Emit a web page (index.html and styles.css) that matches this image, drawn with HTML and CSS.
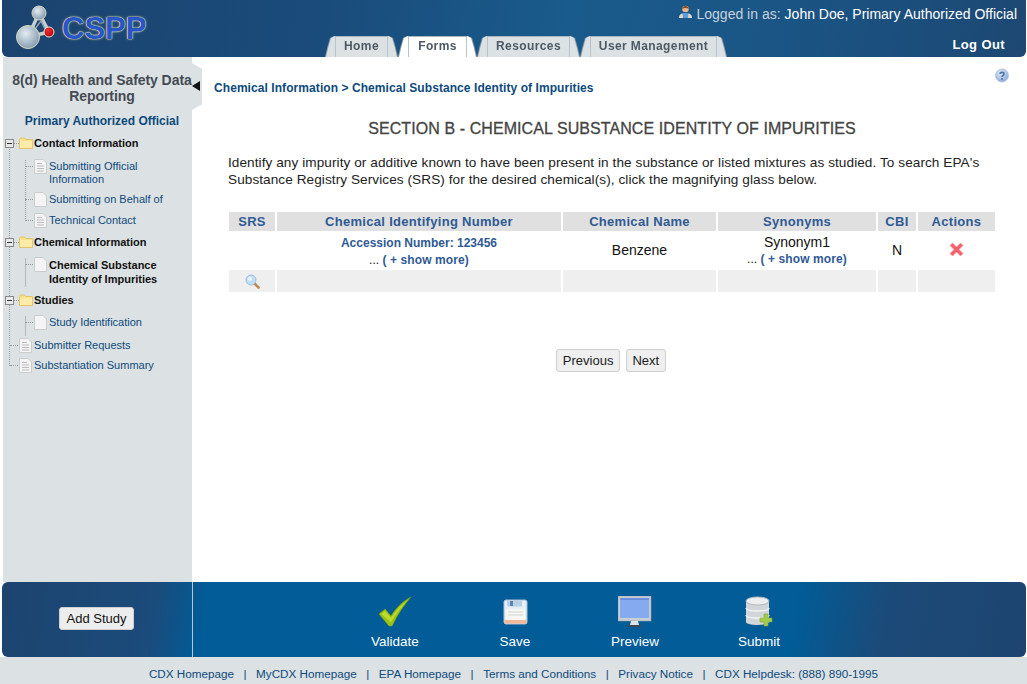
FILE: index.html
```html
<!DOCTYPE html>
<html lang="en">
<head>
<meta charset="utf-8">
<title>CSPP - Chemical Substance Identity of Impurities</title>
<link rel="stylesheet" href="styles.css">
</head>
<body>
<header class="header">
  <div class="logo">
    <svg class="logo-mark" width="42" height="46" viewBox="0 0 42 46">
      <defs>
        <radialGradient id="ballA" cx=".4" cy=".35" r=".7"><stop offset="0" stop-color="#e4ecf2"/><stop offset="1" stop-color="#7f97ad"/></radialGradient>
        <radialGradient id="ballR" cx=".4" cy=".35" r=".7"><stop offset="0" stop-color="#f03030"/><stop offset="1" stop-color="#b00010"/></radialGradient>
      </defs>
      <path d="M12 32 L23 8 L33 27 Z" fill="none" stroke="#c4ced2" stroke-width="3.500"/>
      <path d="M19 24 L25 16 L29 24" fill="none" stroke="#8ea2b2" stroke-width="1.500"/>
      <circle cx="23" cy="8" r="7" fill="url(#ballA)" stroke="#d6d9b8"/>
      <circle cx="12" cy="32" r="11.500" fill="url(#ballA)" stroke="#d6d9b8"/>
      <circle cx="33" cy="27" r="5" fill="url(#ballR)" stroke="#e8e8d0"/>
    </svg>
    <span class="logo-text">CSPP</span>
  </div>
  <div class="head-right">
    <div class="user">
      <svg class="user-icon" width="15" height="15" viewBox="0 0 15 15">
        <path d="M1 14 C1 10 4 9 7.500 9 C11 9 14 10 14 14 Z" fill="#5b9be0"/>
        <path d="M1 14 C1 11.500 2.500 10 4.500 9.500 L5 14 Z M14 14 C14 11.500 12.500 10 10.500 9.500 L10 14 Z" fill="#e8d8c0"/>
        <circle cx="7.500" cy="5" r="3.300" fill="#e8b890"/>
        <path d="M4 5 C4 1 11 1 11 5 C9 3.500 6 3.500 4 5 Z" fill="#8a4a20"/>
      </svg>
      <span class="user-label">Logged in as:</span>
      <span class="user-name">John Doe, Primary Authorized Official</span>
    </div>
    <div class="nav-row">
      <nav class="tabs">
        <a class="tab tab-home">Home</a>
        <a class="tab tab-active tab-forms">Forms</a>
        <a class="tab tab-resources">Resources</a>
        <a class="tab tab-users">User Management</a>
      </nav>
      <a class="logout">Log Out</a>
    </div>
  </div>
</header>

<div class="middle">
  <aside class="sidebar">
    <h2 class="side-title">8(d) Health and Safety Data<br>Reporting</h2>
    <div class="side-role">Primary Authorized Official</div>
    <div class="tree">
      <div class="row row-folder row-contact">
        <svg class="exp" width="9" height="9" viewBox="0 0 9 9"><rect x=".5" y=".5" width="8" height="8" fill="#e8e8e8" stroke="#888"/><path d="M2 4.500H7" stroke="#333"/></svg>
        <span class="conn conn-short"></span>
        <svg class="folder" width="14" height="12" viewBox="0 0 14 12"><path d="M.5 2.500 L1.500 1 H5.500 L6.500 2.500 H13.500 V11.500 H.5 Z" fill="#fbe28a" stroke="#e3c468"/><rect x="1" y="4" width="12" height="7" fill="#fdeca8"/></svg>
        <span class="label-b">Contact Information</span>
      </div>
      <div class="kids kids-dotted kids-contact">
        <div class="row row-kid row-k1"><span class="conn"></span><svg class="doc" width="13" height="15" viewBox="0 0 13 15"><path d="M.5 .5 H9 L12.500 4 V14.500 H.5 Z" fill="#f4f4f4" stroke="#ccc"/><path d="M3 4.500H8M3 7H10M3 9.500H10M3 12H10" stroke="#bbb"/></svg><a class="label">Submitting Official<br>Information</a></div>
        <div class="row row-kid row-k2"><span class="conn"></span><svg class="doc" width="13" height="15" viewBox="0 0 13 15"><path d="M.5 .5 H9 L12.500 4 V14.500 H.5 Z" fill="#f4f4f4" stroke="#ccc"/></svg><a class="label">Submitting on Behalf of</a></div>
        <div class="row row-kid row-k3"><span class="conn"></span><svg class="doc" width="13" height="15" viewBox="0 0 13 15"><path d="M.5 .5 H9 L12.500 4 V14.500 H.5 Z" fill="#f4f4f4" stroke="#ccc"/><path d="M3 4.500H8M3 7H10M3 9.500H10M3 12H10" stroke="#bbb"/></svg><a class="label">Technical Contact</a></div>
      </div>
      <div class="row row-folder row-chem">
        <svg class="exp" width="9" height="9" viewBox="0 0 9 9"><rect x=".5" y=".5" width="8" height="8" fill="#e8e8e8" stroke="#888"/><path d="M2 4.500H7" stroke="#333"/></svg>
        <span class="conn conn-short"></span>
        <svg class="folder" width="14" height="12" viewBox="0 0 14 12"><path d="M.5 2.500 L1.500 1 H5.500 L6.500 2.500 H13.500 V11.500 H.5 Z" fill="#fbe28a" stroke="#e3c468"/><rect x="1" y="4" width="12" height="7" fill="#fdeca8"/></svg>
        <span class="label-b">Chemical Information</span>
      </div>
      <div class="kids kids-solid kids-chem">
        <div class="row row-kid row-k4"><span class="conn"></span><svg class="doc" width="13" height="15" viewBox="0 0 13 15"><path d="M.5 .5 H9 L12.500 4 V14.500 H.5 Z" fill="#f4f4f4" stroke="#ccc"/></svg><span class="label-b label-cur">Chemical Substance<br>Identity of Impurities</span></div>
      </div>
      <div class="row row-folder row-studies">
        <svg class="exp" width="9" height="9" viewBox="0 0 9 9"><rect x=".5" y=".5" width="8" height="8" fill="#e8e8e8" stroke="#888"/><path d="M2 4.500H7" stroke="#333"/></svg>
        <span class="conn conn-short"></span>
        <svg class="folder" width="14" height="12" viewBox="0 0 14 12"><path d="M.5 2.500 L1.500 1 H5.500 L6.500 2.500 H13.500 V11.500 H.5 Z" fill="#fbe28a" stroke="#e3c468"/><rect x="1" y="4" width="12" height="7" fill="#fdeca8"/></svg>
        <span class="label-b">Studies</span>
      </div>
      <div class="kids kids-solid kids-studies">
        <div class="row row-kid row-k5"><span class="conn"></span><svg class="doc" width="13" height="15" viewBox="0 0 13 15"><path d="M.5 .5 H9 L12.500 4 V14.500 H.5 Z" fill="#f4f4f4" stroke="#ccc"/></svg><a class="label">Study Identification</a></div>
      </div>
      <div class="row row-root row-r1"><span class="conn conn-root"></span><svg class="doc" width="13" height="15" viewBox="0 0 13 15"><path d="M.5 .5 H9 L12.500 4 V14.500 H.5 Z" fill="#f4f4f4" stroke="#ccc"/><path d="M3 4.500H8M3 7H10M3 9.500H10M3 12H10" stroke="#bbb"/></svg><a class="label">Submitter Requests</a></div>
      <div class="row row-root row-r2"><span class="conn conn-root"></span><svg class="doc" width="13" height="15" viewBox="0 0 13 15"><path d="M.5 .5 H9 L12.500 4 V14.500 H.5 Z" fill="#f4f4f4" stroke="#ccc"/><path d="M3 4.500H8M3 7H10M3 9.500H10M3 12H10" stroke="#bbb"/></svg><a class="label">Substantiation Summary</a></div>
    </div>
    <div class="notch"><span class="notch-arrow"></span></div>
  </aside>

  <main class="main">
    <svg class="help" width="14" height="15" viewBox="0 0 14 15">
      <defs><radialGradient id="helpG" cx=".4" cy=".3" r=".8"><stop offset="0" stop-color="#e4ecf6"/><stop offset="1" stop-color="#7f9fd0"/></radialGradient></defs>
      <circle cx="7" cy="7.500" r="6.500" fill="url(#helpG)" stroke="#b4c6de"/>
      <path d="M5 6 C5 3.800 9 3.800 9 6 C9 7.500 7 7.500 7 9" fill="none" stroke="#4a74b4" stroke-width="1.600"/>
      <circle cx="7" cy="11" r="1" fill="#4a74b4"/>
    </svg>
    <div class="crumb">Chemical Information &gt; Chemical Substance Identity of Impurities</div>
    <h1 class="section">SECTION B - CHEMICAL SUBSTANCE IDENTITY OF IMPURITIES</h1>
    <p class="intro">Identify any impurity or additive known to have been present in the substance or listed mixtures as studied. To search EPA's Substance Registry Services (SRS) for the desired chemical(s), click the magnifying glass below.</p>
    <table class="grid">
      <thead>
        <tr>
          <th class="c-srs">SRS</th>
          <th class="c-num">Chemical Identifying Number</th>
          <th class="c-name">Chemical Name</th>
          <th class="c-syn">Synonyms</th>
          <th class="c-cbi">CBI</th>
          <th class="c-act">Actions</th>
        </tr>
      </thead>
      <tbody>
        <tr class="data">
          <td></td>
          <td><a class="acc">Accession Number: 123456</a><br><span class="more">... <a class="more-link">( + show more)</a></span></td>
          <td class="cell-up">Benzene</td>
          <td>Synonym1<br><span class="more">... <a class="more-link">( + show more)</a></span></td>
          <td class="cell-up">N</td>
          <td>
            <svg class="del" width="15" height="15" viewBox="0 0 15 15"><path d="M3.500 1 L7.500 5 L11.500 1 L14 3.500 L10 7.500 L14 11.500 L11.500 14 L7.500 10 L3.500 14 L1 11.500 L5 7.500 L1 3.500 Z" fill="#f2606a" stroke="#f79aa0" stroke-width=".8"/></svg>
          </td>
        </tr>
        <tr class="entry">
          <td>
            <svg class="search" width="15" height="15" viewBox="0 0 15 15"><path d="M9 9 L13.500 13.500" stroke="#c08a50" stroke-width="2.600" stroke-linecap="round"/><circle cx="6" cy="6" r="5" fill="#c4ddf6" stroke="#9bbde0"/><circle cx="5" cy="4.800" r="2" fill="#eaf4fd"/></svg>
          </td>
          <td></td><td></td><td></td><td></td><td></td>
        </tr>
      </tbody>
    </table>
    <div class="pager">
      <button class="btn" type="button">Previous</button>
      <button class="btn" type="button">Next</button>
    </div>
  </main>
</div>

<section class="actionbar">
  <div class="action-left"><button class="btn btn-add" type="button">Add Study</button></div>
  <div class="action-right">
    <a class="action">
      <svg width="34" height="32" viewBox="0 0 34 32"><path d="M1 18 L7 13 L13 20 C18 12 25 5 33 1 C26 9 19 19 14 30 L11 30 Z" fill="#9cc214" stroke="#7ea30c" stroke-width=".6"/><path d="M3 18 L7 15 L13 22 C18 14 24 8 30 4 C24 10 18 18 13 26 Z" fill="#bcdc30"/></svg>
      <span>Validate</span>
    </a>
    <a class="action">
      <svg width="34" height="32" viewBox="0 0 34 32"><rect x="6" y="4" width="23" height="24" rx="2" fill="#e6eef6" stroke="#a8bed4"/><rect x="9" y="4.500" width="15" height="6" fill="#b9d0e8"/><rect x="12" y="5" width="3" height="5" fill="#5f86ad"/><rect x="8" y="13" width="19" height="11" fill="#f6f6f2"/><path d="M10 16H25M10 19H25" stroke="#d4d4d0"/><rect x="6.500" y="24" width="22" height="3.500" fill="#f2b89a"/></svg>
      <span>Save</span>
    </a>
    <a class="action">
      <svg width="34" height="32" viewBox="0 0 34 32"><rect x="0" y="0" width="33" height="25" fill="#c8ced2" stroke="#9aa2a8" stroke-width=".6"/><rect x="2" y="2" width="29" height="20" fill="#86aaf0"/><rect x="2" y="2" width="29" height="2" fill="#6a8ee0"/><path d="M13 25 H20 L21 29 H12 Z" fill="#dfe3e6"/><rect x="10" y="29" width="13" height="2" fill="#3a4a55"/></svg>
      <span>Preview</span>
    </a>
    <a class="action action-submit">
      <svg width="28" height="32" viewBox="0 0 28 32"><path d="M1 5 V26 C1 30 24 30 24 26 V5 Z" fill="#d2d6d8"/><ellipse cx="12.500" cy="5" rx="11.500" ry="4" fill="#eceeef" stroke="#b4b8ba"/><path d="M1 12 C1 16 24 16 24 12 M1 19 C1 23 24 23 24 19" fill="none" stroke="#f2f3f4" stroke-width="1.400"/><path d="M15 22 H19 V18 H23 V22 H27 V26 H23 V30 H19 V26 H15 Z" fill="#a4cc4c" stroke="#7fa632" stroke-width=".6"/></svg>
      <span>Submit</span>
    </a>
  </div>
</section>

<footer class="footer">
  <a>CDX Homepage</a><span class="sep">|</span>
  <a>MyCDX Homepage</a><span class="sep">|</span>
  <a>EPA Homepage</a><span class="sep">|</span>
  <a>Terms and Conditions</a><span class="sep">|</span>
  <a>Privacy Notice</a><span class="sep">|</span>
  <a>CDX Helpdesk: (888) 890-1995</a>
</footer>
</body>
</html>
```
FILE: styles.css
```css
* { box-sizing: border-box; }
html, body { margin: 0; padding: 0; }
body {
  width: 1027px;
  height: 684px;
  overflow: hidden;
  background: #fff;
  font-family: "Liberation Sans", Arial, sans-serif;
  display: flex;
  flex-direction: column;
}
a { color: inherit; text-decoration: none; }

/* header */
.header {
  height: 57px;
  margin: 0 1px 0 2px;
  display: flex;
  border-radius: 0 0 6px 6px;
  background: linear-gradient(100deg, #1c436f 0%, #1a4b7a 30%, #195b8c 55%, #1a5585 75%, #1d4873 100%);
}
.logo {
  width: 323px;
  display: flex;
  align-items: flex-start;
  padding: 5px 0 0 14px;
}
.logo-mark { flex: none; }
.logo-text {
  margin: 7px 0 0 4px;
  font-size: 31px;
  line-height: 34px;
  font-weight: bold;
  color: #2a55c8;
  text-shadow: 0 0 1px #e7e8b4, 0 0 1px #e7e8b4, 0 0 1px #e7e8b4, 0 0 3px #a8b084;
}
.head-right {
  flex: 1;
  display: flex;
  flex-direction: column;
}
.user {
  height: 36px;
  display: flex;
  align-items: flex-start;
  justify-content: flex-end;
  padding: 6px 9px 0 0;
  font-size: 14px;
  line-height: 16px;
  color: #fff;
}
.user-icon { margin: -2px 4px 0 0; }
.user-label { color: #c5d2dd; margin-right: 4px; }
.nav-row {
  flex: 1;
  display: flex;
  justify-content: space-between;
}
.tabs { display: flex; }
.tab {
  position: relative;
  height: 21px;
  display: block;
  text-align: center;
  font-size: 12px;
  line-height: 19px;
  font-weight: bold;
  letter-spacing: .4px;
  color: #4c5a66;
  background: #dce1e3;
  border-left: 1px solid #b3c4d0;
  border-right: 1px solid #b3c4d0;
  border-top: 1px solid #aab6be;
  filter: drop-shadow(1px 0 0 #8c9aa5) drop-shadow(-1px 0 0 #8c9aa5);
}
.tab::before, .tab::after {
  content: "";
  position: absolute;
  top: -1px;
  width: 9px;
  height: 21px;
  background: #dce1e3;
}
.tab::before {
  left: -10px;
  clip-path: polygon(0 100%, 25% 55%, 55% 10%, 100% 0, 100% 100%);
}
.tab::after {
  right: -10px;
  clip-path: polygon(0 0, 45% 10%, 75% 55%, 100% 100%, 0 100%);
}
.tab-home { width: 53px; margin-left: 10px; }
.tab-forms { width: 59px; margin-left: 20px; }
.tab-resources { width: 83px; margin-left: 20px; }
.tab-users { width: 127px; margin-left: 20px; }
.tab-active { background: #fff; color: #4c5a66; }
.tab-active::before, .tab-active::after { background: #fff; }
.logout {
  padding: 0 21px 0 0;
  font-size: 13px;
  line-height: 17px;
  font-weight: bold;
  letter-spacing: .4px;
  color: #fff;
}

/* middle */
.middle {
  height: 525px;
  display: flex;
}
.sidebar {
  position: relative;
  flex: none;
  width: 189px;
  margin-left: 3px;
  background: #dce1e3;
  padding-top: 15px;
}
.side-title {
  position: relative;
  z-index: 1;
  margin: 0;
  padding-left: 9px;
  text-align: center;
  white-space: nowrap;
  font-size: 14px;
  line-height: 16px;
  font-weight: bold;
  letter-spacing: -.07px;
  color: #444b52;
}
.side-role {
  margin-top: 10px;
  padding-left: 9px;
  text-align: center;
  white-space: nowrap;
  font-size: 12px;
  line-height: 15px;
  font-weight: bold;
  color: #0d4a7c;
}
.notch {
  position: absolute;
  left: 189px;
  top: 6px;
  width: 10px;
  height: 47px;
  background: #dce1e3;
  clip-path: polygon(0 0, 100% 12%, 100% 88%, 0 100%);
}
.notch-arrow {
  position: absolute;
  left: 0;
  top: 18px;
  width: 0;
  height: 0;
  border-top: 5px solid transparent;
  border-bottom: 5px solid transparent;
  border-right: 8px solid #111;
}

/* tree */
.tree {
  position: relative;
  margin-top: 8px;
  padding-left: 2px;
  height: 240px;
  font-size: 11px;
  line-height: 13px;
}
.tree::before {
  content: "";
  position: absolute;
  left: 6px;
  top: 8px;
  height: 221px;
  border-left: 1px dotted #9a9a9a;
}
.row { display: flex; align-items: flex-start; position: relative; }
.exp { flex: none; margin-top: 2px; position: relative; background: #dce1e3; }
.conn { flex: none; width: 10px; margin-top: 6px; border-top: 1px dotted #9a9a9a; }
.conn-short { width: 5px; margin-top: 6px; }
.conn-root { width: 10px; margin-left: 5px; }
.folder { flex: none; margin-top: 0; }
.doc { flex: none; margin: -1px 0 0 -1px; }
.label-b { font-weight: bold; color: #111; white-space: nowrap; margin-left: 1px; }
.label-cur { margin-left: 2px; line-height: 14px; }
.label { color: #0d4a7c; white-space: nowrap; margin-left: 2px; }
.kids { position: relative; padding-left: 20px; }
.kids::before {
  content: "";
  position: absolute;
  left: 20px;
  top: 0;
  bottom: 0;
}
.kids-dotted::before { border-left: 1px dotted #9a9a9a; }
.kids-solid::before { border-left: 1px solid #b4b8bb; }
.kids-contact { margin-top: 10px; height: 59px; }
.kids-chem { margin-top: 9px; height: 29px; }
.kids-studies { margin-top: 9px; height: 20px; }
.row-k2 { margin-top: 7px; }
.row-k3 { margin-top: 7px; }
.row-chem { margin-top: 17px; }
.row-studies { margin-top: 7px; }
.row-r1 { margin-top: 3px; }
.row-r2 { margin-top: 6px; }

/* main */
.main {
  position: relative;
  flex: 1;
  padding: 24px 30px 0 22px;
}
.help { position: absolute; right: 31px; top: 11px; }
.crumb {
  font-size: 12px;
  line-height: 15px;
  font-weight: bold;
  letter-spacing: .07px;
  color: #0d4a7c;
}
.section {
  margin: 24px 0 0 0;
  text-align: center;
  font-size: 16px;
  line-height: 18px;
  font-weight: normal;
  letter-spacing: .08px;
  color: #444;
  -webkit-text-stroke: .3px #444;
  white-space: nowrap;
  width: 796px;
}
.intro {
  margin: 16px 0 0 14px;
  width: 752px;
  font-size: 13.6px;
  line-height: 17px;
  letter-spacing: .07px;
  color: #222;
}
.grid {
  margin: 24px 0 0 13px;
  width: 770px;
  border-collapse: separate;
  border-spacing: 2px 0;
  table-layout: fixed;
  font-size: 14px;
  color: #111;
  text-align: center;
}
.c-srs { width: 46px; }
.c-num { width: 284px; }
.c-name { width: 153px; }
.c-syn { width: 158px; }
.c-cbi { width: 38px; }
.c-act { width: 77px; }
.grid th {
  height: 19px;
  padding: 0 0 1px;
  line-height: 17px;
  background: #e0e0e0;
  font-size: 13px;
  font-weight: bold;
  letter-spacing: .3px;
  color: #2f5a94;
}
.data td {
  height: 39px;
  padding: 0;
  line-height: 16px;
  vertical-align: middle;
}
.data .cell-up { padding-bottom: 2px; }
.entry td {
  height: 22px;
  padding: 0;
  background: #efefef;
  vertical-align: middle;
}
.acc { font-size: 12px; font-weight: bold; color: #2f5a94; }
.more { font-size: 12px; }
.more-link { font-weight: bold; letter-spacing: .1px; color: #2f5a94; }
.del, .search { display: block; margin: 0 auto; }
.del { position: relative; top: -1px; }
.pager {
  margin: 57px 0 0 0;
  width: 794px;
  display: flex;
  justify-content: center;
  gap: 6px;
}
.btn {
  height: 23px;
  padding: 0 5.5px;
  font-family: "Liberation Sans", Arial, sans-serif;
  font-size: 13px;
  color: #222;
  background: #efefef;
  border: 1px solid #cfcfcf;
  border-radius: 3px;
}

/* action bar */
.actionbar {
  height: 75px;
  margin: 0 1px 0 2px;
  display: flex;
  border-radius: 6px;
  background: linear-gradient(100deg, #1d446f 0%, #1b4b7b 15%, #015c97 20%, #015c97 77%, #1c4a78 86%, #1d4471 100%);
}
.action-left {
  flex: none;
  width: 191px;
  border-right: 1px solid #b7c6d2;
  display: flex;
  align-items: center;
  justify-content: center;
}
.btn-add {
  width: 75px;
  padding: 0;
  margin: -2px 1px 0 0;
  background: #ededed;
  color: #111;
  font-size: 13px;
}
.action-right {
  flex: 1;
  display: flex;
  padding-left: 142px;
}
.action {
  width: 120px;
  display: flex;
  flex-direction: column;
  align-items: center;
  padding-top: 14px;
  color: #fff;
  font-size: 13.5px;
  line-height: 16px;
}
.action-submit { margin-left: 4px; }
.action svg { margin-bottom: 6px; }

/* footer */
.footer {
  flex: 1;
  background: #dce1e3;
  display: flex;
  justify-content: center;
  align-items: center;
  padding: 5px 0 0 0;
  font-size: 11.7px;
  color: #0d4a7c;
}
.sep { margin: 0 9.5px; }
```
